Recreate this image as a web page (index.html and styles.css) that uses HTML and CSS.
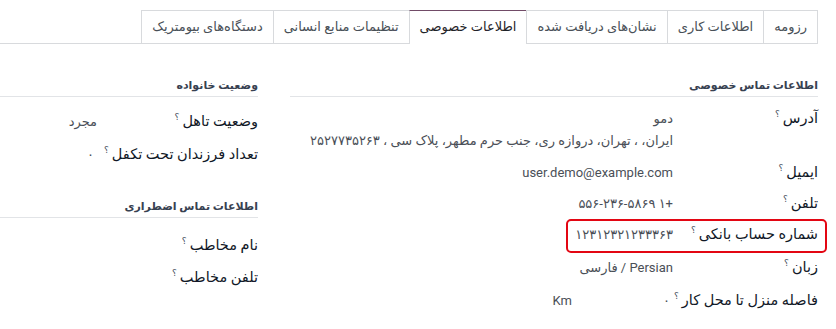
FILE: index.html
```html
<!DOCTYPE html>
<html lang="fa" dir="rtl">
<head>
<meta charset="utf-8">
<link rel="stylesheet" href="styles.css">
</head>
<body>
<div class="sheet">
  <ul class="tabs">
    <li class="tab">رزومه</li>
    <li class="tab">اطلاعات کاری</li>
    <li class="tab">نشان‌های دریافت شده</li>
    <li class="tab active">اطلاعات خصوصی</li>
    <li class="tab">تنظیمات منابع انسانی</li>
    <li class="tab">دستگاه‌های بیومتریک</li>
  </ul>
  <div class="groups">
    <section class="group group-main">
      <h3 class="group-title">اطلاعات تماس خصوصی</h3>
      <div class="rows">
        <div class="row">
          <div class="label">آدرس<sup>؟</sup></div>
          <div class="value address">
            <div>دمو</div>
            <div>ایران، ، تهران، دروازه ری، جنب حرم مطهر، پلاک سی ، ۲۵۲۷۷۳۵۲۶۳</div>
          </div>
        </div>
        <div class="row">
          <div class="label">ایمیل<sup>؟</sup></div>
          <div class="value latin">user.demo@example.com</div>
        </div>
        <div class="row">
          <div class="label">تلفن<sup>؟</sup></div>
          <div class="value">+۱ <bdi dir="ltr">۵۵۶-۲۳۶-۵۸۶۹</bdi></div>
        </div>
        <div class="row highlight">
          <div class="label">شماره حساب بانکی<sup>؟</sup></div>
          <div class="value">۱۲۳۱۲۳۲۱۲۳۳۳۶۳</div>
        </div>
        <div class="row spaced">
          <div class="label">زبان<sup>؟</sup></div>
          <div class="value"><span class="latin">Persian</span> / فارسی</div>
        </div>
        <div class="row spaced">
          <div class="label">فاصله منزل تا محل کار<sup>؟</sup></div>
          <div class="value"><span class="num-input">۰</span><span class="unit latin">Km</span></div>
        </div>
      </div>
    </section>
    <section class="group group-side">
      <h3 class="group-title">وضعیت خانواده</h3>
      <div class="rows rows-side">
        <div class="row">
          <div class="label">وضعیت تاهل<sup>؟</sup></div>
          <div class="value">مجرد</div>
        </div>
        <div class="row">
          <div class="label">تعداد فرزندان تحت تکفل<sup>؟</sup></div>
          <div class="value"><span class="num-input">۰</span></div>
        </div>
      </div>
      <h3 class="group-title second">اطلاعات تماس اضطراری</h3>
      <div class="rows rows-side2">
        <div class="row">
          <div class="label">نام مخاطب<sup>؟</sup></div>
          <div class="value"></div>
        </div>
        <div class="row">
          <div class="label">تلفن مخاطب<sup>؟</sup></div>
          <div class="value"></div>
        </div>
      </div>
    </section>
  </div>
</div>
</body>
</html>
```
FILE: styles.css
```css
html, body {
  margin: 0;
  padding: 0;
  background: #ffffff;
}
body {
  font-family: Roboto, "DejaVu Sans", sans-serif;
  font-size: 13px;
  color: #212529;
  direction: rtl;
}
.sheet {
  padding: 10px 18px 0 0;
}
.tabs {
  list-style: none;
  margin: 0;
  padding: 0;
  display: flex;
  border-bottom: 1px solid #d8dadd;
}
.tab {
  height: 32px;
  line-height: 31px;
  padding: 0 10px;
  border-top: 1px solid #d8dadd;
  border-left: 1px solid #d8dadd;
  color: #495057;
  font-size: 13px;
  white-space: nowrap;
}
.tab:first-child {
  border-right: 1px solid #d8dadd;
}
.tab.active {
  border-top: 1px solid #714b67;
  background: #fff;
  margin-bottom: -1px;
  height: 33px;
  color: #1f2328;
}
.groups {
  display: grid;
  grid-template-columns: 528px 258px;
  column-gap: 32px;
  margin-top: 33px;
}
.group-title {
  margin: 0 0 14px 0;
  font-size: 11px;
  font-weight: bold;
  line-height: 18px;
  padding-bottom: 1px;
  border-bottom: 1px solid #e2e4e7;
  color: #374151;
}
.group-main .group-title {
  margin-bottom: 11px;
}
.group-title.second {
  margin-top: 33px;
  margin-bottom: 17px;
}
.rows {
  display: flex;
  flex-direction: column;
  gap: 10px;
}
.rows-side {
  gap: 12px;
}
.rows-side2 {
  gap: 11px;
}
.row {
  display: grid;
  grid-template-columns: 145px 1fr;
  position: relative;
}
.row.spaced {
  margin-top: 2px;
}
.group-side .row {
  grid-template-columns: 161px 1fr;
  min-height: 21px;
}
.label {
  font-size: 14.5px;
  line-height: 21px;
  color: #111827;
}
.label sup {
  font-size: 9px;
  color: #4b5563;
  margin-right: 3px;
  vertical-align: top;
  line-height: 12px;
}
.value {
  font-size: 13px;
  line-height: 21px;
  color: #4a4f57;
}
.value.address {
  line-height: 22px;
}
.latin {
  font-family: Roboto, sans-serif;
}
.num-input {
  display: inline-block;
  width: 98px;
  padding-right: 3px;
}
.highlight::after {
  content: "";
  position: absolute;
  top: -5px;
  right: -9px;
  width: 257px;
  height: 30px;
  border: 2px solid #e30613;
  border-radius: 5px;
}
```
